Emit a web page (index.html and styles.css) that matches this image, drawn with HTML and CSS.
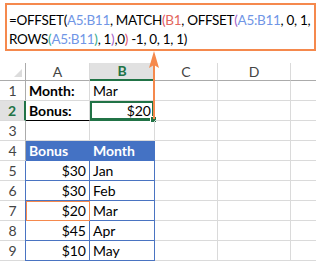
FILE: index.html
```html
<!DOCTYPE html>
<html>
<head>
<meta charset="utf-8">
<link rel="stylesheet" href="styles.css">
</head>
<body>
<div class="formula">=OFFSET(<span class="ref">A5:B11</span>, MATCH<span class="p1">(</span><span class="red">B1</span>, OFFSET<span class="p2">(</span><span class="ref">A5:B11</span>, 0, 1,<br>ROWS<span class="p3">(</span><span class="ref">A5:B11</span><span class="p3">)</span>, 1<span class="p2">)</span>,0<span class="p1">)</span> -1, 0, 1, 1)</div>
<div class="sheet">
  <div class="hd corner"><span class="tri"></span></div>
  <div class="hd col">A</div>
  <div class="hd col sel">B</div>
  <div class="hd col">C</div>
  <div class="hd col">D</div>
  <div class="hd col last"></div>

  <div class="rh">1</div>
  <div class="c b">Month:</div>
  <div class="c">Mar</div>
  <div class="c"></div>
  <div class="c"></div>
  <div class="c"></div>

  <div class="rh rsel">2</div>
  <div class="c b under">Bonus:</div>
  <div class="c r active">$20<span class="handle"></span><span class="arrow"><svg width="12" height="68" viewBox="0 0 12 68"><path d="M6 0 L11 17 L6 14 L1 17 Z" fill="#f5894d"/><rect x="5" y="14" width="2" height="54" fill="#f5894d"/></svg></span></div>
  <div class="c"></div>
  <div class="c"></div>
  <div class="c"></div>

  <div class="rh">3</div>
  <div class="c"></div>
  <div class="c"></div>
  <div class="c"></div>
  <div class="c"></div>
  <div class="c"></div>

  <div class="rh">4</div>
  <div class="c th">Bonus</div>
  <div class="c th">Month</div>
  <div class="c"></div>
  <div class="c"></div>
  <div class="c"></div>

  <div class="rh">5</div>
  <div class="c r tb">$30</div>
  <div class="c tb">Jan</div>
  <div class="c"></div>
  <div class="c"></div>
  <div class="c"></div>

  <div class="rh">6</div>
  <div class="c r tb">$30</div>
  <div class="c tb">Feb</div>
  <div class="c"></div>
  <div class="c"></div>
  <div class="c"></div>

  <div class="rh">7</div>
  <div class="c r tb hit">$20</div>
  <div class="c tb">Mar</div>
  <div class="c"></div>
  <div class="c"></div>
  <div class="c"></div>

  <div class="rh">8</div>
  <div class="c r tb">$45</div>
  <div class="c tb">Apr</div>
  <div class="c"></div>
  <div class="c"></div>
  <div class="c"></div>

  <div class="rh">9</div>
  <div class="c r tb">$10</div>
  <div class="c tb">May</div>
  <div class="c"></div>
  <div class="c"></div>
  <div class="c"></div>
</div>
</body>
</html>
```
FILE: styles.css
```css
html, body {
  margin: 0;
  padding: 0;
  background: #fff;
}
body {
  width: 316px;
  height: 262px;
  overflow: hidden;
  font-family: "Lato", "Open Sans", sans-serif;
  color: #000;
}
.formula {
  margin: 3px 0 0 5px;
  width: 305px;
  height: 38px;
  border: 2px solid #f5894d;
  padding: 6px 0 0 2px;
  font-size: 13.5px;
  letter-spacing: -0.3px;
  line-height: 19px;
  box-sizing: content-box;
  white-space: nowrap;
}
.ref { color: #7096e6; }
.red { color: #e3675d; }
.p1 { color: #e0506a; }
.p2 { color: #a45cc6; }
.p3 { color: #35ab8d; }

.sheet {
  margin-top: 12px;
  display: grid;
  grid-template-columns: 26px 64px 65px 63px 73px 25px;
  grid-template-rows: 18px repeat(9, 20px);
  font-size: 14px;
}
.hd {
  border-right: 1px solid #dadada;
  border-bottom: 1px solid #ababab;
  color: #444;
  text-align: center;
  line-height: 17px;
  font-size: 14px;
  position: relative;
}
.corner {
  border-right-color: #ababab;
}
.tri {
  position: absolute;
  right: 3px;
  bottom: 3px;
  width: 0;
  height: 0;
  border-left: 8px solid transparent;
  border-bottom: 8px solid #dcdcdc;
}
.hd.sel {
  background: #e1e1e1;
  color: #217346;
  font-weight: bold;
  border-bottom: 2px solid #217346;
  line-height: 16px;
}
.hd.last { border-right: none; }
.rh {
  border-right: 1px solid #ababab;
  border-bottom: 1px solid #dadada;
  color: #444;
  text-align: center;
  line-height: 18px;
  padding-top: 1px;
  font-size: 14px;
}
.rh.rsel {
  background: #e1e1e1;
  color: #217346;
  font-weight: bold;
  border-right: 2px solid #217346;
}
.c {
  border-right: 1px solid #dadada;
  border-bottom: 1px solid #dadada;
  line-height: 18px;
  padding: 1px 3px 0;
  position: relative;
  white-space: nowrap;
}
.c:nth-child(6n) { border-right: none; }
.b { font-weight: bold; }
.r { text-align: right; }
.under { border-bottom-color: #000; }
.active {
  box-shadow: inset 0 0 0 2px #217346;
  border-bottom-color: #217346;
}
.handle {
  position: absolute;
  right: -3px;
  bottom: -3px;
  width: 5px;
  height: 5px;
  background: #217346;
  border: 1px solid #fff;
}
.arrow {
  position: absolute;
  left: 58px;
  bottom: 1px;
  line-height: 0;
}
.th {
  background: #4472c4;
  color: #fff;
  font-weight: bold;
  border-right-color: #4472c4;
  border-bottom-color: #4472c4;
}
.tb {
  border-right-color: #4a74c2;
  border-bottom-color: #4a74c2;
}
.tb.r { box-shadow: -1px 0 0 #4a74c2; }
.tb.r.hit {
  border-right-color: #f5894d;
  border-bottom-color: #f5894d;
  box-shadow: -1px 0 0 #4a74c2, inset 1px 1px 0 #f5894d;
}
```
